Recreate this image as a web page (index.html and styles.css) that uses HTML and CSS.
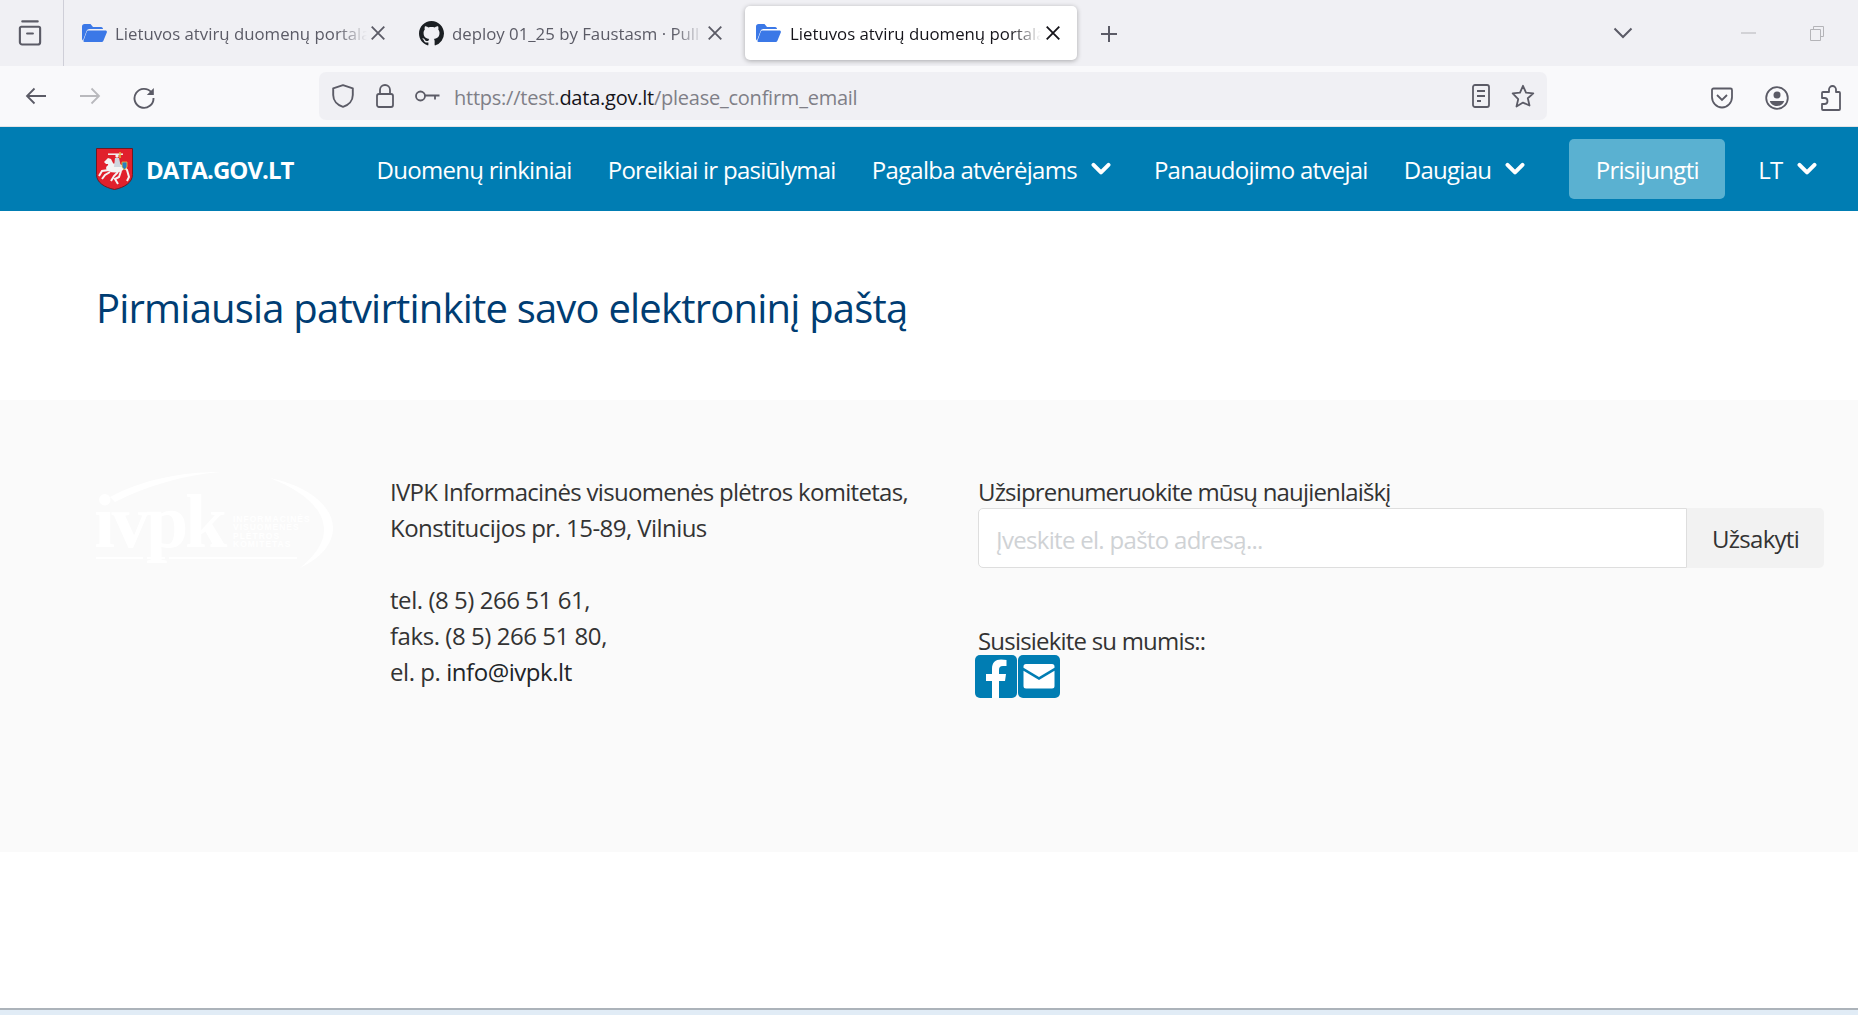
FILE: index.html
```html
<!DOCTYPE html>
<html lang="lt">
<head>
<meta charset="utf-8">
<title>Lietuvos atvirų duomenų portalas</title>
<link rel="stylesheet" href="styles.css">
</head>
<body>
<svg class="defs" width="0" height="0" aria-hidden="true">
  <symbol id="folder" viewBox="0 0 25 18"><path d="M0 2.500C0 1 1 0 2.500 0h6l2.500 3h8C20.500 3 21 4 21 5H7.500C6 5 5 5.800 4.500 7L1 16.500C.4 16 0 15.500 0 14.500z" fill="#3b78e7"/><path d="M6 6.500h17.500c1 0 1.700 1 1.300 2L21.500 16.500c-.4 1-1.200 1.500-2.200 1.500H2.500c-.8 0-1.200-.5-1-1.200L4.800 7.500C5 6.900 5.500 6.500 6 6.500z" fill="#3b78e7"/></symbol>
  <symbol id="close" viewBox="0 0 14 14"><path d="M1.500 1.500l11 11M12.500 1.500l-11 11" fill="none" stroke="currentColor" stroke-width="1.600"/></symbol>
  <symbol id="caret" viewBox="0 0 20 14"><path d="M2.500 2.800L10 10.300 17.500 2.800" fill="none" stroke="#fff" stroke-width="4" stroke-linecap="round" stroke-linejoin="round"/></symbol>
</svg>

<header class="tabstrip">
  <div class="tab-manager">
    <svg class="icon-manager" viewBox="0 0 24 28"><path d="M4 2.500h16M3 8h18a1.500 1.500 0 0 1 1.500 1.500V24a2.500 2.500 0 0 1-2.500 2.500H4A2.500 2.500 0 0 1 1.500 24V9.500A1.500 1.500 0 0 1 3 8zM9 15h6" fill="none" stroke="#5b5b66" stroke-width="2.200" stroke-linecap="round"/></svg>
  </div>
  <div class="tabs">
    <div class="tab">
      <svg class="tab-icon"><use href="#folder"/></svg>
      <span class="tab-title">Lietuvos atvirų duomenų portalas</span>
      <svg class="tab-close"><use href="#close"/></svg>
    </div>
    <div class="tab">
      <svg class="tab-icon tab-icon-gh" viewBox="0 0 16 16"><path fill="#1b1f23" d="M8 0C3.580 0 0 3.580 0 8c0 3.540 2.290 6.530 5.470 7.590.4.070.55-.17.55-.38 0-.19-.01-.82-.01-1.490-2.010.37-2.530-.49-2.690-.94-.09-.23-.48-.94-.82-1.130-.28-.15-.68-.52-.01-.53.63-.01 1.080.58 1.230.82.720 1.210 1.870.870 2.330.660.070-.520.280-.870.510-1.070-1.780-.2-3.640-.890-3.640-3.950 0-.870.310-1.590.820-2.150-.080-.2-.360-1.020.080-2.120 0 0 .670-.210 2.200.820.640-.180 1.320-.270 2-.270s1.360.090 2 .270c1.530-1.040 2.200-.820 2.200-.820.440 1.100.160 1.920.080 2.120.510.560.820 1.270.820 2.150 0 3.070-1.870 3.750-3.650 3.950.290.250.540.730.540 1.480 0 1.070-.010 1.930-.010 2.200 0 .210.150.460.550.380A8.010 8.010 0 0 0 16 8c0-4.420-3.580-8-8-8z"/></svg>
      <span class="tab-title">deploy 01_25 by Faustasm · Pull request</span>
      <svg class="tab-close"><use href="#close"/></svg>
    </div>
    <div class="tab tab-active">
      <svg class="tab-icon"><use href="#folder"/></svg>
      <span class="tab-title">Lietuvos atvirų duomenų portalas</span>
      <svg class="tab-close"><use href="#close"/></svg>
    </div>
  </div>
  <svg class="new-tab" viewBox="0 0 18 18"><path d="M9 1v16M1 9h16" stroke="#5b5b66" stroke-width="2" fill="none"/></svg>
  <svg class="tab-list" viewBox="0 0 20 12"><path d="M1.500 1.500L10 10l8.500-8.500" fill="none" stroke="#5b5b66" stroke-width="2"/></svg>
  <svg class="win-min" viewBox="0 0 15 2"><path d="M0 1h15" stroke="#b4b4b8" stroke-width="1"/></svg>
  <svg class="win-restore" viewBox="0 0 14 15"><path d="M3.500 3.500V.5h10v10h-3M.5 3.500h10v11H.5z" fill="none" stroke="#b4b4b8" stroke-width="1"/></svg>
</header>

<div class="toolbar">
  <svg class="tool nav-back" viewBox="0 0 22 18"><path d="M21 9H2M9.500 1.500L2 9l7.500 7.500" fill="none" stroke="#5b5b66" stroke-width="1.800"/></svg>
  <svg class="tool nav-forward" viewBox="0 0 22 18"><path d="M1 9h19M12.500 1.500L20 9l-7.500 7.500" fill="none" stroke="#b9b9bd" stroke-width="1.800"/></svg>
  <svg class="tool nav-reload" viewBox="0 0 22 22"><path d="M18.500 5.500A9.500 9.500 0 1 0 20.500 11" fill="none" stroke="#5b5b66" stroke-width="1.900"/><path d="M20.800 1v7h-7z" fill="#5b5b66"/></svg>
  <div class="urlbar">
    <svg class="url-shield" viewBox="0 0 22 24"><path d="M11 1.200L20.800 4.300V11c0 5.500-4 10-9.800 11.800C5.200 21 1.200 16.500 1.200 11V4.300z" fill="none" stroke="#5b5b66" stroke-width="1.900" stroke-linejoin="round"/></svg>
    <svg class="url-lock" viewBox="0 0 18 24"><path d="M4 10V6a5 5 0 0 1 10 0v4M3 10h12a2 2 0 0 1 2 2v9a2 2 0 0 1-2 2H3a2 2 0 0 1-2-2v-9a2 2 0 0 1 2-2z" fill="none" stroke="#5b5b66" stroke-width="1.800"/></svg>
    <svg class="url-key" viewBox="0 0 25 12"><circle cx="5.500" cy="6" r="4.500" fill="none" stroke="#5b5b66" stroke-width="1.800"/><path d="M10 5.500h14.500M20 5.500v4" fill="none" stroke="#5b5b66" stroke-width="1.800"/></svg>
    <div class="url-text">https://test.<span class="url-host">data.gov.lt</span>/please_confirm_email</div>
    <svg class="url-reader" viewBox="0 0 18 24"><rect x="1" y="1" width="16" height="22" rx="2" fill="none" stroke="#5b5b66" stroke-width="1.800"/><path d="M5 7h8M5 12h8M5 17h4" stroke="#5b5b66" stroke-width="1.800"/></svg>
    <svg class="url-star" viewBox="0 0 24 24"><path d="M12 1.800l3 6.900 7.300.7-5.500 4.800 1.700 7.300L12 18.600l-6.500 3.900 1.700-7.300L1.700 9.400 9 8.700z" fill="none" stroke="#5b5b66" stroke-width="1.800" stroke-linejoin="round"/></svg>
  </div>
  <svg class="tool-pocket" viewBox="0 0 22 22"><path d="M2.500 1.500h17A1.500 1.500 0 0 1 21 3v7c0 5.800-4.500 10.500-10 10.500S1 15.800 1 10V3a1.500 1.500 0 0 1 1.500-1.500z" fill="none" stroke="#5b5b66" stroke-width="1.800"/><path d="M6 8l5 5 5-5" fill="none" stroke="#5b5b66" stroke-width="1.800"/></svg>
  <svg class="tool-profile" viewBox="0 0 24 24"><circle cx="12" cy="12" r="10.800" fill="none" stroke="#5b5b66" stroke-width="1.800"/><circle cx="12" cy="9" r="3.500" fill="#5b5b66"/><path d="M4.800 15h14.400c-1 3.500-4 5-7.200 5s-6.200-1.500-7.200-5z" fill="#5b5b66"/></svg>
  <svg class="tool-ext" viewBox="0 0 21 26"><path d="M9 7V4.500a3.500 3.500 0 0 1 7 0V7h3a1 1 0 0 1 1 1v16a1 1 0 0 1-1 1H3a1 1 0 0 1-1-1v-5h2.500a3 3 0 0 0 0-6H2V8a1 1 0 0 1 1-1z" fill="none" stroke="#5b5b66" stroke-width="1.800" stroke-linejoin="round"/></svg>
</div>

<nav class="site-nav">
  <a class="brand">
    <svg class="emblem" viewBox="0 0 37 42">
      <path d="M.5.500h36v26c0 8-8 13-18 15C8.500 39.500.5 34.500.5 26.500z" fill="#e1202c" stroke="#6b1a25" stroke-width="1"/>
      <ellipse cx="19" cy="20" rx="9" ry="4.500" fill="#f4f4f4"/>
      <path d="M8 14L12 10l3 1 4 8-6 3-1-6-2 0z" fill="#f4f4f4"/>
      <path d="M13 22L6 23 3 28M14 24L9 27 6 31M25 23L23 29 19 31 22 36M22 24L18 28 15 33M27 18L31 22 33 29 31 33" fill="none" stroke="#f4f4f4" stroke-width="2"/>
      <path d="M19 10h4l2 9h-7z" fill="#cfd6de"/>
      <circle cx="21" cy="8" r="1.700" fill="#f4f4f4"/>
      <path d="M12 6.200h15" stroke="#f4f4f4" stroke-width="1.500"/>
      <path d="M24 4v6" stroke="#e0b93a" stroke-width="1.500"/>
      <path d="M26 14h5v5l-2.500 3-2.500-3z" fill="#2a7fc0" stroke="#e8c33a" stroke-width=".8"/>
    </svg>
    <span class="brand-name">DATA.GOV.LT</span>
  </a>
  <a class="nav-link">Duomenų rinkiniai</a>
  <a class="nav-link">Poreikiai ir pasiūlymai</a>
  <a class="nav-link nav-drop">Pagalba atvėrėjams<svg class="nav-caret"><use href="#caret"/></svg></a>
  <a class="nav-link">Panaudojimo atvejai</a>
  <a class="nav-link nav-drop">Daugiau<svg class="nav-caret"><use href="#caret"/></svg></a>
  <a class="login-btn">Prisijungti</a>
  <a class="nav-link nav-drop">LT<svg class="nav-caret"><use href="#caret"/></svg></a>
</nav>

<main class="page-main">
  <h1 class="page-title">Pirmiausia patvirtinkite savo elektroninį paštą</h1>
</main>

<footer class="site-footer">
  <svg class="ivpk-logo" viewBox="0 0 240 100">
    <path d="M14 25C45 8 85 0 124 0 88 3 50 14 19 30z" fill="#fff"/>
    <path d="M174 6C212 14 237 34 237 56 237 72 225 86 204 96 218 84 228 72 228 58 228 36 205 18 174 6z" fill="#fff"/>
    <text class="ivpk-word" x="-2" y="75">ivpk</text>
    <text class="ivpk-small" x="137" y="50">INFORMACINĖS</text>
    <text class="ivpk-small" x="137" y="58.300">VISUOMENĖS</text>
    <text class="ivpk-small" x="137" y="66.600">PLĖTROS</text>
    <text class="ivpk-small" x="137" y="75">KOMITETAS</text>
    <path d="M0 85h47v2H0zM51 85h18v2H51zM73 85h128v2H73z" fill="#fff"/>
  </svg>
  <div class="contacts">
    <p class="contact-para">IVPK Informacinės visuomenės plėtros komitetas,<br><span class="contact-address">Konstitucijos pr. 15-89, Vilnius</span></p>
    <p class="contact-para contact-numbers">tel. (8 5) 266 51 61,<br>faks. (8 5) 266 51 80,<br>el. p. <a class="mail-link">info@ivpk.lt</a></p>
  </div>
  <div class="subscribe">
    <label class="sub-label">Užsiprenumeruokite mūsų naujienlaiškį</label>
    <div class="sub-group">
      <div class="sub-input">Įveskite el. pašto adresą...</div>
      <div class="sub-btn">Užsakyti</div>
    </div>
    <div class="social-label">Susisiekite su mumis::</div>
    <div class="social">
      <svg class="social-icon" viewBox="0 0 42 43"><rect width="42" height="43" rx="5" fill="#007db3"/><path d="M24 43V26h6l1-7h-7v-4c0-2.500 1-4 4-4h3.500V5c-1.500-.3-3.500-.5-5.500-.5-5.500 0-9 3.200-9 9V19h-6v7h6v17z" fill="#fff"/></svg>
      <svg class="social-icon" viewBox="0 0 42 43"><rect width="42" height="43" rx="5" fill="#007db3"/><path d="M8 9h26a2.500 2.500 0 0 1 2.500 2.500v1.300L21 22 5.500 12.800v-1.300A2.500 2.500 0 0 1 8 9z" fill="#fff"/><path d="M5.500 15.800L21 25l15.500-9.200V31a2.500 2.500 0 0 1-2.500 2.500H8A2.500 2.500 0 0 1 5.500 31z" fill="#fff"/></svg>
    </div>
  </div>
</footer>
<div class="page-blank"></div>
<div class="taskbar-edge"></div>
</body>
</html>
```
FILE: styles.css
```css
* { box-sizing: border-box; }
html, body { margin: 0; height: 100%; }
body {
  width: 1858px;
  height: 1015px;
  overflow: hidden;
  display: flex;
  flex-direction: column;
  background: #fff;
  font-family: "Open Sans", "Noto Sans", sans-serif;
  color: #333;
}
.defs { position: absolute; }

/* Tab strip */
.tabstrip {
  height: 66px;
  flex: none;
  display: flex;
  align-items: flex-start;
  background: #f0f0f4;
}
.tab-manager {
  width: 64px;
  height: 66px;
  flex: none;
  padding: 19px 0 0 18px;
  border-right: 1px solid #cfcfd8;
}
.icon-manager { display: block; width: 24px; height: 27px; }
.tabs { display: flex; gap: 5px; margin: 6px 0 0 7px; }
.tab {
  width: 332px;
  height: 54px;
  display: flex;
  align-items: center;
  padding-left: 11px;
  border-radius: 5px;
  color: #5b5b66;
  font-size: 16.800px;
  letter-spacing: 0;
}
.tab-active {
  background: #fff;
  color: #15141a;
  box-shadow: 0 1px 5px rgba(0, 0, 0, .3);
}
.tab-icon { width: 25px; height: 18px; flex: none; }
.tab-icon-gh { height: 25px; }
.tab-title {
  width: 252px;
  margin: 0 3px 0 8px;
  overflow: hidden;
  white-space: nowrap;
  -webkit-mask-image: linear-gradient(to right, #000 88%, transparent 100%);
  mask-image: linear-gradient(to right, #000 88%, transparent 100%);
}
.tab-active .tab-title { margin: 0 4px 0 9px; width: 251px; }
.tab-close { width: 16px; height: 16px; flex: none; color: #5b5b66; }
.tab-active .tab-close { color: #15141a; }
.new-tab { width: 18px; height: 18px; flex: none; margin: 25px 0 0 23px; }
.tab-list { width: 20px; height: 12px; flex: none; margin: 27px 0 0 495px; }
.win-min { width: 15px; height: 2px; flex: none; margin: 32px 0 0 108px; }
.win-restore { width: 14px; height: 15px; flex: none; margin: 26px 0 0 54px; }

/* Toolbar */
.toolbar {
  height: 61px;
  flex: none;
  display: flex;
  align-items: flex-start;
  padding-left: 25px;
  background: #f9f9fb;
  border-bottom: 1px solid #e3e3e6;
}
.toolbar > svg { margin-top: 21px; }
.tool { width: 22px; height: 18px; flex: none; }
.toolbar > .nav-forward { margin-left: 32px; }
.toolbar > .nav-reload { height: 22px; margin-left: 32px; }
.urlbar {
  width: 1228px;
  height: 48px;
  flex: none;
  margin: 6px 0 0 164px;
  display: flex;
  align-items: center;
  padding-left: 13px;
  border-radius: 7px;
  background: #f0f0f4;
}
.url-shield { width: 22px; height: 24px; flex: none; }
.url-lock { width: 18px; height: 24px; flex: none; margin-left: 22px; }
.url-key { width: 25px; height: 12px; flex: none; margin-left: 21px; }
.url-text {
  margin-left: 14px;
  padding-top: 2px;
  flex: 1;
  font-size: 20px;
  letter-spacing: -0.24px;
  color: #7f7f87;
  white-space: nowrap;
}
.url-host { color: #15141a; }
.url-reader { width: 18px; height: 24px; flex: none; }
.url-star { width: 24px; height: 24px; flex: none; margin: 0 12px 0 21px; }
.toolbar > .tool-pocket { width: 22px; height: 22px; flex: none; margin-left: 164px; }
.toolbar > .tool-profile { width: 24px; height: 24px; flex: none; margin-left: 32px; margin-top: 20px; }
.toolbar > .tool-ext { width: 21px; height: 26px; flex: none; margin-left: 31px; margin-top: 19px; }

/* Site navigation */
.site-nav {
  height: 84px;
  flex: none;
  display: flex;
  align-items: center;
  padding-left: 96px;
  background: #007db3;
  color: #fff;
  font-size: 24px;
}
.brand { display: flex; align-items: center; gap: 13px; margin-right: 65px; }
.emblem { width: 37px; height: 42px; flex: none; }
.brand-name { font-weight: 700; font-size: 24px; letter-spacing: -0.95px; }
.nav-link {
  display: flex;
  align-items: center;
  padding: 0 18px;
  white-space: nowrap;
  letter-spacing: -0.72px;
}
.nav-drop { padding-right: 25px; }
.nav-caret { width: 20px; height: 14px; margin-left: 14px; flex: none; }
.login-btn {
  width: 156px;
  height: 60px;
  display: flex;
  align-items: center;
  justify-content: center;
  margin: 0 15px 0 19px;
  border-radius: 5px;
  background: #5ab1d1;
  color: #fff;
  letter-spacing: -0.7px;
}

/* Main */
.page-main { height: 189px; flex: none; padding: 73px 0 0 96px; }
.page-title {
  margin: 0;
  font-weight: 400;
  font-size: 40px;
  line-height: 48px;
  letter-spacing: -0.8px;
  color: #003d73;
}

/* Footer */
.site-footer {
  height: 452px;
  flex: none;
  display: flex;
  align-items: flex-start;
  padding: 72px 0 0 96px;
  background: #fafafa;
  font-size: 24px;
  line-height: 36px;
  letter-spacing: -0.7px;
}
.ivpk-logo { width: 240px; height: 100px; flex: none; margin-right: 54px; }
.ivpk-word {
  font-family: "Liberation Serif", serif;
  font-weight: 700;
  font-size: 76px;
  letter-spacing: -3.500px;
  fill: #fff;
}
.ivpk-small {
  font-family: "Liberation Sans", sans-serif;
  font-weight: 700;
  font-size: 8.500px;
  letter-spacing: 1px;
  fill: #fff;
}
.contacts { width: 585px; flex: none; margin-top: 2px; }
.contact-para { margin: 0 0 36px; }
.contact-address { letter-spacing: -0.55px; }
.contact-numbers { letter-spacing: -0.45px; }
.mail-link { color: #212529; }
.subscribe { width: 849px; flex: none; margin-left: 3px; padding-top: 5px; }
.sub-label { display: block; height: 31px; line-height: 30px; letter-spacing: -0.83px; }
.sub-group { display: flex; height: 60px; }
.sub-input {
  width: 709px;
  flex: none;
  padding: 13px 17px 11px;
  border: 1px solid #dedede;
  border-radius: 5px 0 0 5px;
  background: #fff;
  color: #cfd2d5;
}
.sub-btn {
  width: 137px;
  flex: none;
  padding: 13px 0 11px;
  text-align: center;
  border-radius: 0 5px 5px 0;
  background: #f2f2f2;
  color: #333;
}
.social-label { margin-top: 56px; height: 31px; line-height: 34px; letter-spacing: -0.8px; }
.social { display: flex; gap: 1px; margin-left: -3px; }
.social-icon { width: 42px; height: 43px; flex: none; display: block; }

/* Below the page */
.page-blank { flex: 1; }
.taskbar-edge {
  height: 7px;
  flex: none;
  background: #e1ecf6;
  border-top: 2px solid #acb3ba;
}
```
